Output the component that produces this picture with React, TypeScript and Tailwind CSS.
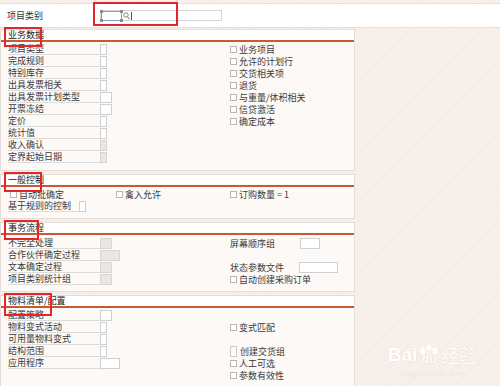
import React from 'react';

const font = { fontFamily: '"Noto Sans CJK SC", "Liberation Sans", sans-serif' };

const Check = ({ label, tall }: { label: string; tall?: boolean }) => (
  <div className="flex items-center h-[12px] text-[9px] text-[#3a3a3a] leading-none whitespace-nowrap">
    <span
      className={
        tall
          ? 'w-[7px] h-[11px] border border-[#c9c9c9] bg-white mr-[3px]'
          : 'w-[7px] h-[7px] border border-[#b8b8b8] bg-white mr-[2px]'
      }
    />
    {label}
  </div>
);

const Box = ({ size, grey }: { size: 'sm' | 'md' | 'lg' | 'xl'; grey?: boolean }) => {
  const w = size === 'sm' ? 'w-[7px]' : size === 'md' ? 'w-[12px]' : size === 'lg' ? 'w-[20px]' : 'w-[39px]';
  return (
    <span
      className={`${w} h-[11px] border ${
        grey ? 'bg-[#e9e7e6] border-[#d8d5d3]' : 'bg-white border-[#cfcfcf]'
      }`}
    />
  );
};

const Field = ({ label, box, grey, labelW = 92 }: { label: string; box?: 'sm' | 'md' | 'lg' | 'xl'; grey?: boolean; labelW?: number }) => (
  <div className="flex items-center h-[12px]">
    <span
      className="h-[12px] flex items-center text-[9px] leading-none text-[#3a3a3a] border-b border-[#dcdcdc] whitespace-nowrap"
      style={{ width: labelW }}
    >
      {label}
    </span>
    {box && <Box size={box} grey={grey} />}
  </div>
);

const Section = ({
  title,
  mark,
  markH = 20,
  children,
  className = '',
}: {
  title: string;
  mark: number;
  markH?: number;
  children: React.ReactNode;
  className?: string;
}) => (
  <div className={`relative bg-[#fcf9f7] border border-[#e4ddd8] ${className}`}>
    <div className="h-[12px] bg-white border-b-[2px] border-[#c65a35] pl-[7px] flex items-end pb-[1px] text-[9px] leading-none text-[#222]">
      {title}
    </div>
    <div
      className="absolute left-[3px] top-[-3px] border-2 border-[#e2262a] pointer-events-none"
      style={{ width: mark, height: markH }}
    />
    {children}
  </div>
);

const Row = ({ left, right }: { left: React.ReactNode; right?: React.ReactNode }) => (
  <div className="flex h-[12px]">
    <div className="w-[229px] pl-[7px]">{left}</div>
    <div className="flex-1">{right}</div>
  </div>
);

export default function App() {
  return (
    <div
      className="w-[500px] h-[386px] overflow-hidden bg-[#f7efea] bg-[repeating-linear-gradient(135deg,#f8f1ec_0px,#f8f1ec_2px,#f3eae4_2px,#f3eae4_3px)]"
      style={font}
    >
      {/* top row */}
      <div className="mt-[3px] h-[25px] bg-white border-t border-b border-[#e2e0de] flex items-center relative">
        <span className="w-[100px] pl-[7px] text-[9px] leading-none text-[#333]">项目类别</span>
        <div className="w-[122px] h-[11px] border border-[#d5d5d5] bg-white flex items-center">
          <span className="relative w-[21px] h-[10px] border border-[#7ea3cf]">
            <span className="absolute -left-[2px] -top-[2px] w-[3px] h-[3px] bg-[#8a8a8a]" />
            <span className="absolute -right-[2px] -top-[2px] w-[3px] h-[3px] bg-[#8a8a8a]" />
            <span className="absolute -left-[2px] -bottom-[2px] w-[3px] h-[3px] bg-[#8a8a8a]" />
            <span className="absolute -right-[2px] -bottom-[2px] w-[3px] h-[3px] bg-[#8a8a8a]" />
          </span>
          <svg width="7" height="8" viewBox="0 0 7 8" className="ml-[1px]">
            <circle cx="3" cy="3" r="2.2" fill="none" stroke="#777" strokeWidth="0.9" />
            <line x1="4.6" y1="4.6" x2="6.5" y2="7.5" stroke="#777" strokeWidth="1" />
          </svg>
          <span className="w-px h-[8px] bg-[#555] ml-[1px]" />
        </div>
        <div className="absolute left-[93px] top-[-2px] w-[85px] h-[24px] border-2 border-[#e2262a]" />
      </div>

      <div className="flex">
        <div className="w-[355px] flex flex-col gap-[3px] pt-[1px]">
          <Section title="业务数据" mark={38} className="h-[142px]">
            <div className="pt-[1px]">
              <Row left={<Field label="项目类型" box="sm" />} right={<Check label="业务项目" />} />
              <Row left={<Field label="完成规则" box="sm" />} right={<Check label="允许的计划行" />} />
              <Row left={<Field label="特别库存" box="sm" />} right={<Check label="交货相关项" />} />
              <Row left={<Field label="出具发票相关" box="sm" />} right={<Check label="退货" />} />
              <Row left={<Field label="出具发票计划类型" box="md" />} right={<Check label="与重量/体积相关" />} />
              <Row left={<Field label="开票冻结" box="md" />} right={<Check label="信贷激活" />} />
              <Row left={<Field label="定价" box="sm" />} right={<Check label="确定成本" />} />
              <Row left={<Field label="统计值" box="sm" />} />
              <Row left={<Field label="收入确认" box="sm" grey />} />
              <Row left={<Field label="定界起始日期" box="sm" grey />} />
            </div>
          </Section>

          <Section title="一般控制" mark={38} className="h-[45px]">
            <div className="pt-[1px]">
              <div className="flex h-[12px]">
                <div className="w-[115px] pl-[9px]"><Check label="自动批确定" /></div>
                <div className="w-[114px]"><Check label="禽入允许" /></div>
                <div className="flex-1"><Check label="订购数量 = 1" /></div>
              </div>
              <Row left={<Field label="基于规则的控制" box="sm" labelW={71} />} />
            </div>
          </Section>

          <Section title="事务流程" mark={35} className="h-[70px]">
            <div className="pt-[2px]">
              <Row
                left={<Field label="不完全处理" box="md" grey />}
                right={
                  <div className="flex items-center h-[12px]">
                    <span className="w-[70px] text-[9px] leading-none text-[#3a3a3a]">屏幕顺序组</span>
                    <Box size="lg" />
                  </div>
                }
              />
              <Row left={<Field label="合作伙伴确定过程" box="lg" grey />} />
              <Row
                left={<Field label="文本确定过程" box="md" grey />}
                right={
                  <div className="flex items-center h-[12px]">
                    <span className="w-[69px] text-[9px] leading-none text-[#3a3a3a]">状态参数文件</span>
                    <Box size="xl" />
                  </div>
                }
              />
              <Row left={<Field label="项目类别统计组" box="md" grey />} right={<Check label="自动创建采购订单" />} />
            </div>
          </Section>

          <Section title="物料清单/配置" mark={48} markH={23} className="h-[100px]">
            <div className="pt-[1px]">
              <Row left={<Field label="配置策略" box="md" />} />
              <Row left={<Field label="物料变式活动" box="sm" />} right={<Check label="变式匹配" />} />
              <Row left={<Field label="可用量物料变式" box="sm" />} />
              <Row left={<Field label="结构范围" box="sm" />} right={<Check label="创建交货组" tall />} />
              <Row left={<Field label="应用程序" box="lg" />} right={<Check label="人工可选" />} />
              <Row left={<span />} right={<Check label="参数有效性" />} />
            </div>
          </Section>
        </div>

        <div className="flex-1 flex flex-col items-center justify-end pb-[16px] pl-[10px]">
          <div
            className="flex items-center gap-[1px] text-white text-[19px] leading-none font-bold [text-shadow:0_0_1px_#d6c9c0]"
            style={{ fontFamily: '"Liberation Sans", sans-serif' }}
          >
            <span>Bai</span>
            <span className="relative flex items-center justify-center w-[22px] h-[22px]">
              <svg width="22" height="22" viewBox="0 0 22 22" className="absolute inset-0">
                <ellipse cx="5" cy="7" rx="2.5" ry="3.2" fill="#fff" />
                <ellipse cx="11" cy="3.5" rx="2.5" ry="3" fill="#fff" />
                <ellipse cx="17" cy="7" rx="2.5" ry="3.2" fill="#fff" />
              </svg>
              <span className="relative text-[12px] text-white mt-[9px]">du</span>
            </span>
            <span className="text-[18px] font-normal" style={font}>经验</span>
          </div>
          <div className="text-[7px] text-[#efe6df] mt-[3px] tracking-wider" style={{ fontFamily: '"Liberation Sans", sans-serif' }}>
            jingyan.baidu.com
          </div>
        </div>
      </div>
    </div>
  );
}
